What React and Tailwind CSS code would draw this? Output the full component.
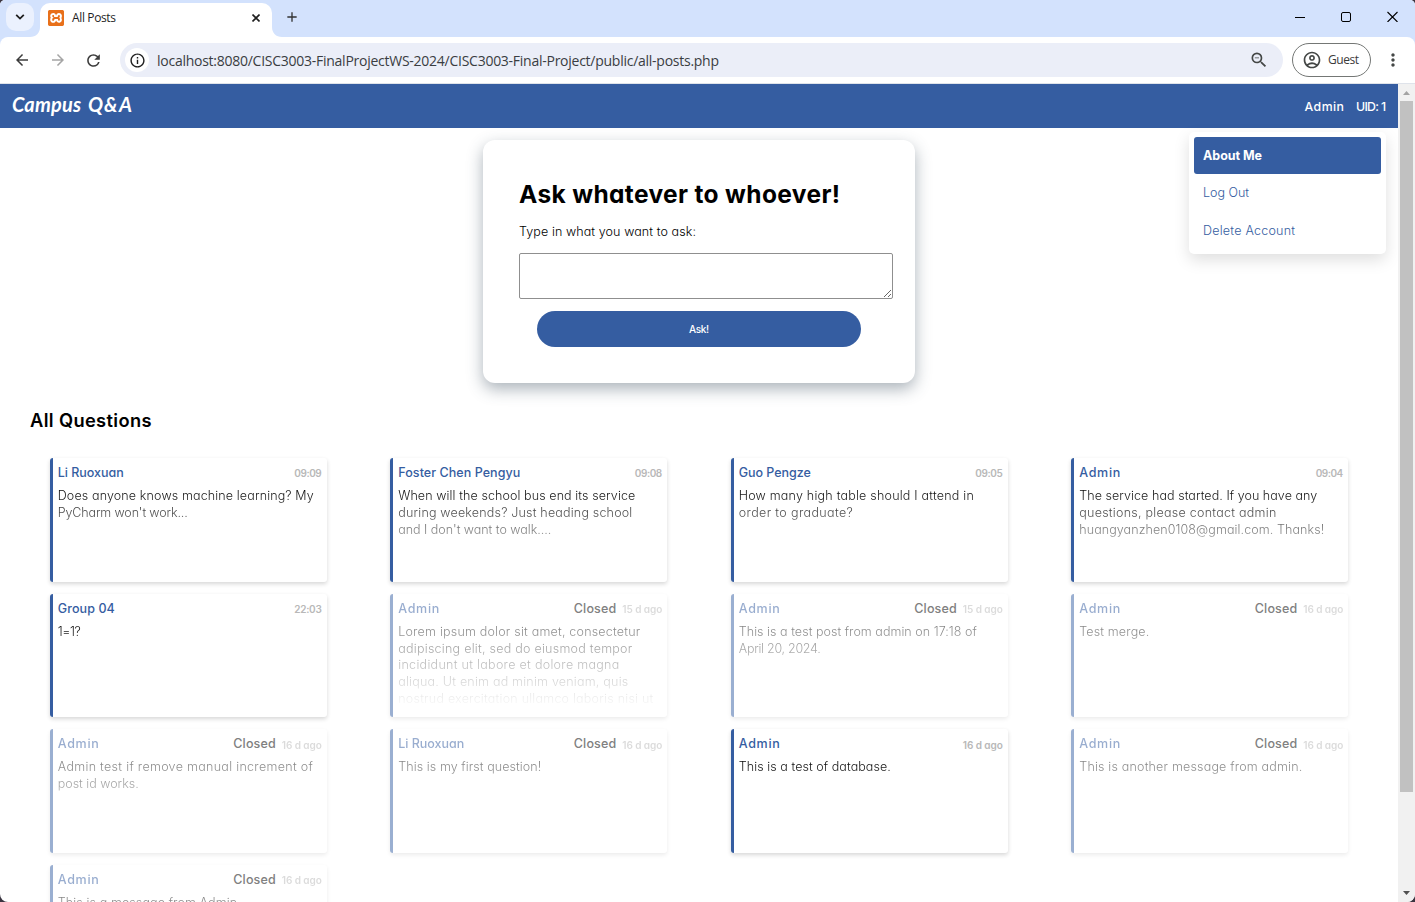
import { useLayoutEffect, useRef } from 'react';
import { SiXampp } from 'react-icons/si';
import {
  MdArrowBack,
  MdArrowForward,
  MdRefresh,
  MdOutlineInfo,
  MdZoomOut,
  MdOutlineAccountCircle,
  MdMoreVert,
  MdAdd,
} from 'react-icons/md';

// One line of text whose tracking is adjusted so that it spans `w` pixels.
function Fit({ w, className = '', children }) {
  const ref = useRef(null);
  useLayoutEffect(() => {
    const el = ref.current;
    el.style.letterSpacing = '0px';
    const natural = el.getBoundingClientRect().width;
    const tracking = (w - natural) / (children.length - 1);
    el.style.letterSpacing = `${tracking}px`;
    el.style.marginRight = `${-tracking}px`;
  }, [w, children]);
  return (
    <span ref={ref} className={`inline-block shrink-0 whitespace-pre ${className}`}>
      {children}
    </span>
  );
}

const posts = [
  { name: 'Li Ruoxuan', nw: 66, time: '09:09', lines: [['Does anyone knows machine learning? My', 256], ["PyCharm won't work...", 130]] },
  { name: 'Foster Chen Pengyu', nw: 122, time: '09:08', lines: [['When will the school bus end its service', 237], ['during weekends? Just heading school', 234], ["and I don't want to walk....", 153]] },
  { name: 'Guo Pengze', nw: 72, time: '09:05', lines: [['How many high table should I attend in', 235], ['order to graduate?', 114]] },
  { name: 'Admin', nw: 41, time: '09:04', lines: [['The service had started. If you have any', 238], ['questions, please contact admin', 197], ['huangyanzhen0108@gmail.com. Thanks!', 245]] },
  { name: 'Group 04', nw: 57, time: '22:03', lines: [['1=1?', 23]] },
  { name: 'Admin', nw: 41, time: '15 d ago', closed: true, lines: [['Lorem ipsum dolor sit amet, consectetur', 242], ['adipiscing elit, sed do eiusmod tempor', 234], ['incididunt ut labore et dolore magna', 221], ['aliqua. Ut enim ad minim veniam, quis', 230], ['nostrud exercitation ullamco laboris nisi ut', 255], ['aliquip ex ea commodo consequat. Duis', 240]] },
  { name: 'Admin', nw: 41, time: '15 d ago', closed: true, lines: [['This is a test post from admin on 17:18 of', 238], ['April 20, 2024.', 82]] },
  { name: 'Admin', nw: 41, time: '16 d ago', closed: true, lines: [['Test merge.', 70]] },
  { name: 'Admin', nw: 41, time: '16 d ago', closed: true, lines: [['Admin test if remove manual increment of', 255], ['post id works.', 81]] },
  { name: 'Li Ruoxuan', nw: 66, time: '16 d ago', closed: true, lines: [['This is my first question!', 143]] },
  { name: 'Admin', nw: 41, time: '16 d ago', lines: [['This is a test of database.', 152]] },
  { name: 'Admin', nw: 41, time: '16 d ago', closed: true, lines: [['This is another message from admin.', 223]] },
  { name: 'Admin', nw: 41, time: '16 d ago', closed: true, lines: [['This is a message from Admin.', 183]] },
];

function Post({ post }) {
  const dim = post.closed ? 'opacity-50' : '';
  return (
    <div
      className={`mx-auto h-[123.75px] w-[277px] overflow-hidden rounded-[3px] border-l-[3px] bg-white px-[5px] ${
        post.closed
          ? 'border-[#9aafd1] shadow-[0_2px_4px_rgba(0,0,0,0.08)]'
          : 'border-[#355da1] shadow-[0_2px_4px_rgba(0,0,0,0.16)]'
      }`}
    >
      <div className="flex h-[29.4px] items-center pt-[1.4px]">
        <Fit w={post.nw} className={`text-[12.5px] font-medium text-[#355da1] ${dim}`}>
          {post.name}
        </Fit>
        <div className="ml-auto flex items-center gap-[6px]">
          {post.closed && (
            <Fit w={42.5} className="text-[12.5px] font-medium text-[#808080]">
              Closed
            </Fit>
          )}
          <Fit
            w={post.time.includes('d') ? 40 : 27.5}
            className={`pt-px text-[10px] font-semibold text-[#b8b8b8] ${dim}`}
          >
            {post.time}
          </Fit>
        </div>
      </div>
      <div className={`h-[87px] overflow-hidden pt-[0.7px] [mask-image:linear-gradient(to_bottom,#000_0%,transparent_100%)] ${dim}`}>
        {post.lines.map(([text, w]) => (
          <div key={text} className="flex h-[16.8px] items-center">
            <Fit w={w} className="text-[12.5px] font-light text-black">
              {text}
            </Fit>
          </div>
        ))}
      </div>
    </div>
  );
}

function Foot({ flip }) {
  return (
    <svg width="10" height="10" viewBox="0 0 10 10" className={flip ? '-scale-x-100' : ''}>
      <path d="M10 0v10H0C6 10 10 6 10 0Z" fill="#fff" />
    </svg>
  );
}

function TabStrip() {
  return (
    <div className="flex h-[37px] bg-[#d3e2fd]">
      <div className="mt-[3px] ml-[6px] flex size-7 items-center justify-center rounded-[10px] bg-[#ebf1fe]">
        <svg width="10" height="6" viewBox="0 0 10 6" fill="none" stroke="#1f1f1f" strokeWidth="1.8">
          <path d="M1.2 0.9L5 4.6L8.8 0.9" />
        </svg>
      </div>
      <div className="-ml-1 flex items-end">
        <Foot />
      </div>
      <div className="mt-[3px] flex h-[34px] w-[232px] items-center rounded-t-[10px] bg-white pr-3 pb-[5px] pl-2">
        <div className="size-4 overflow-hidden rounded-[2px] bg-[#e8701a]">
          <div className="size-4 p-[2px]">
            <div className="size-3 bg-white" />
          </div>
          <SiXampp className="-mt-4 size-4 text-[#e8701a]" />
        </div>
        <Fit w={44} className="ml-2 font-['Open_Sans'] text-[12px] text-[#1f1f1f]">
          All Posts
        </Fit>
        <svg width="8" height="8" viewBox="0 0 8 8" fill="none" stroke="#1f1f1f" strokeWidth="1.6" className="ml-auto">
          <path d="M0.5 0.5l7 7M7.5 0.5l-7 7" />
        </svg>
      </div>
      <div className="flex items-end">
        <Foot flip />
      </div>
      <MdAdd className="mt-[9px] ml-[2px] size-4 text-[#333]" />
      <div className="mt-[11px] mr-[17px] ml-auto flex gap-[35px]">
        <svg width="11" height="11" viewBox="0 0 11 11" stroke="#000" fill="none">
          <path d="M0 6.5h10" />
        </svg>
        <svg width="11" height="11" viewBox="0 0 11 11" stroke="#000" fill="none">
          <rect x="0.5" y="1.5" width="9" height="9" rx="1.5" />
        </svg>
        <svg width="12" height="11" viewBox="0 0 12 11" stroke="#000" strokeWidth="1.1" fill="none" className="-mr-px">
          <path d="M0.5 1l10 10M10.5 1l-10 10" />
        </svg>
      </div>
    </div>
  );
}

function Toolbar() {
  return (
    <div className="bg-[#d3e2fd]">
      <div className="flex h-[47px] items-center rounded-t-[8px] border-b border-[#dfe3ea] bg-white px-[13px]">
        <MdArrowBack className="size-[18px] text-[#3c3c3c]" />
        <MdArrowForward className="ml-[18px] size-[18px] text-[#a5a5a5]" />
        <MdRefresh className="ml-[17px] size-[19px] text-[#3c3c3c]" />
        <div className="ml-[17px] flex h-[34px] w-[1163px] items-center rounded-full bg-[#ebeef8] pr-[14px] pl-[5px]">
          <div className="flex size-6 items-center justify-center rounded-full bg-white">
            <MdOutlineInfo className="size-[17px] text-[#1f1f1f]" />
          </div>
          <Fit w={562} className="ml-2 font-['Open_Sans'] text-[14px] text-[#3a3d42]">
            localhost:8080/CISC3003-FinalProjectWS-2024/CISC3003-Final-Project/public/all-posts.php
          </Fit>
          <MdZoomOut className="ml-auto size-5 text-[#444746]" />
        </div>
        <div className="ml-[9px] flex h-[34px] w-[79px] items-center rounded-full border border-[#747775] pl-[9px]">
          <MdOutlineAccountCircle className="size-5 text-[#444746]" />
          <Fit w={31} className="ml-[6px] font-['Open_Sans'] text-[12px] text-[#3a3a3a]">
            Guest
          </Fit>
        </div>
        <MdMoreVert className="-mr-px ml-auto size-5 text-[#444746]" />
      </div>
    </div>
  );
}

export default function App() {
  return (
    <div className="h-[902px] w-[1415px] overflow-hidden bg-[#3a3440]">
      <div className="flex h-full flex-col overflow-hidden rounded-[5px_5px_8px_8px] bg-white font-[Inter,sans-serif] [font-feature-settings:'cv11']">
        <TabStrip />
        <Toolbar />
        <div className="flex min-h-0 flex-1">
          <div className="relative w-[1398px] overflow-hidden">
            <header className="flex h-11 items-center bg-[#355da1] px-3 text-white">
              <Fit w={69} className="mb-1 font-[Lato] text-[20px] leading-none font-bold italic">
                Campus
              </Fit>
              <Fit w={44} className="mb-1 ml-[7px] font-[Lato] text-[20px] leading-none font-bold italic">
                Q&amp;A
              </Fit>
              <Fit w={39.5} className="mt-[3px] ml-auto text-[12.3px] font-medium">
                Admin
              </Fit>
              <Fit w={30} className="mt-[2px] ml-3 text-[12.3px] font-medium">
                UID: 1
              </Fit>
            </header>

            <nav className="absolute top-12 right-3 flex h-[122px] w-[197px] flex-col rounded-[5px] bg-white p-[5px] text-[12.5px] text-[#355da1] shadow-[0_6px_16px_rgba(0,0,0,0.13)]">
              <div className="flex h-[37px] items-center rounded-[3px] bg-[#355da1] px-[9px] pt-[1.5px] text-white">
                <Fit w={59} className="font-bold">About Me</Fit>
              </div>
              <div className="flex h-[37.5px] items-center px-[9px] pt-[1.5px]">
                <Fit w={46} className="font-light">Log Out</Fit>
              </div>
              <div className="mt-px flex h-[37.5px] items-center px-[9px] pt-[1.5px]">
                <Fit w={92} className="font-light">Delete Account</Fit>
              </div>
            </nav>

            <section className="mx-auto mt-3 flex h-[243px] w-[432px] flex-col rounded-[12px] bg-white px-9 pt-9 shadow-[0_6px_16px_rgba(55,75,90,0.42)]">
              <h1 className="flex h-9 items-center">
                <Fit w={321} className="text-[24.5px] font-bold text-black">
                  Ask whatever to whoever!
                </Fit>
              </h1>
              <label className="mt-[10px] flex h-5 items-center">
                <Fit w={177} className="text-[12.5px] font-light text-black">
                  Type in what you want to ask:
                </Fit>
              </label>
              <textarea className="mt-[11px] block h-[46px] w-[374px] shrink-0 resize rounded-[2px] border border-[#8f8f8f]" />
              <button className="mx-auto mt-3 flex h-9 w-[324px] shrink-0 items-center justify-center rounded-full bg-[#355da1] text-white">
                <Fit w={20} className="text-[10px] font-medium">Ask!</Fit>
              </button>
            </section>

            <h2 className="mt-[23px] ml-[30px] flex h-7 items-center pt-px">
              <Fit w={121.5} className="text-[18.3px] font-semibold text-black">
                All Questions
              </Fit>
            </h2>

            <main className="mx-[18px] mt-6 grid grid-cols-4 gap-y-[11.85px]">
              {posts.map((post, i) => (
                <Post key={i} post={post} />
              ))}
            </main>
          </div>

          <div className="flex w-[17px] flex-col items-center bg-[#f1f1f1]">
            <svg width="17" height="17" viewBox="0 0 17 17">
              <path d="M5 11h7L8.5 7Z" fill="#a3a3a3" />
            </svg>
            <div className="h-[691px] w-[13px] bg-[#c1c1c1]" />
            <svg width="17" height="17" viewBox="0 0 17 17" className="mt-auto">
              <path d="M5 6h7L8.5 10Z" fill="#505050" />
            </svg>
          </div>
        </div>
      </div>
    </div>
  );
}
